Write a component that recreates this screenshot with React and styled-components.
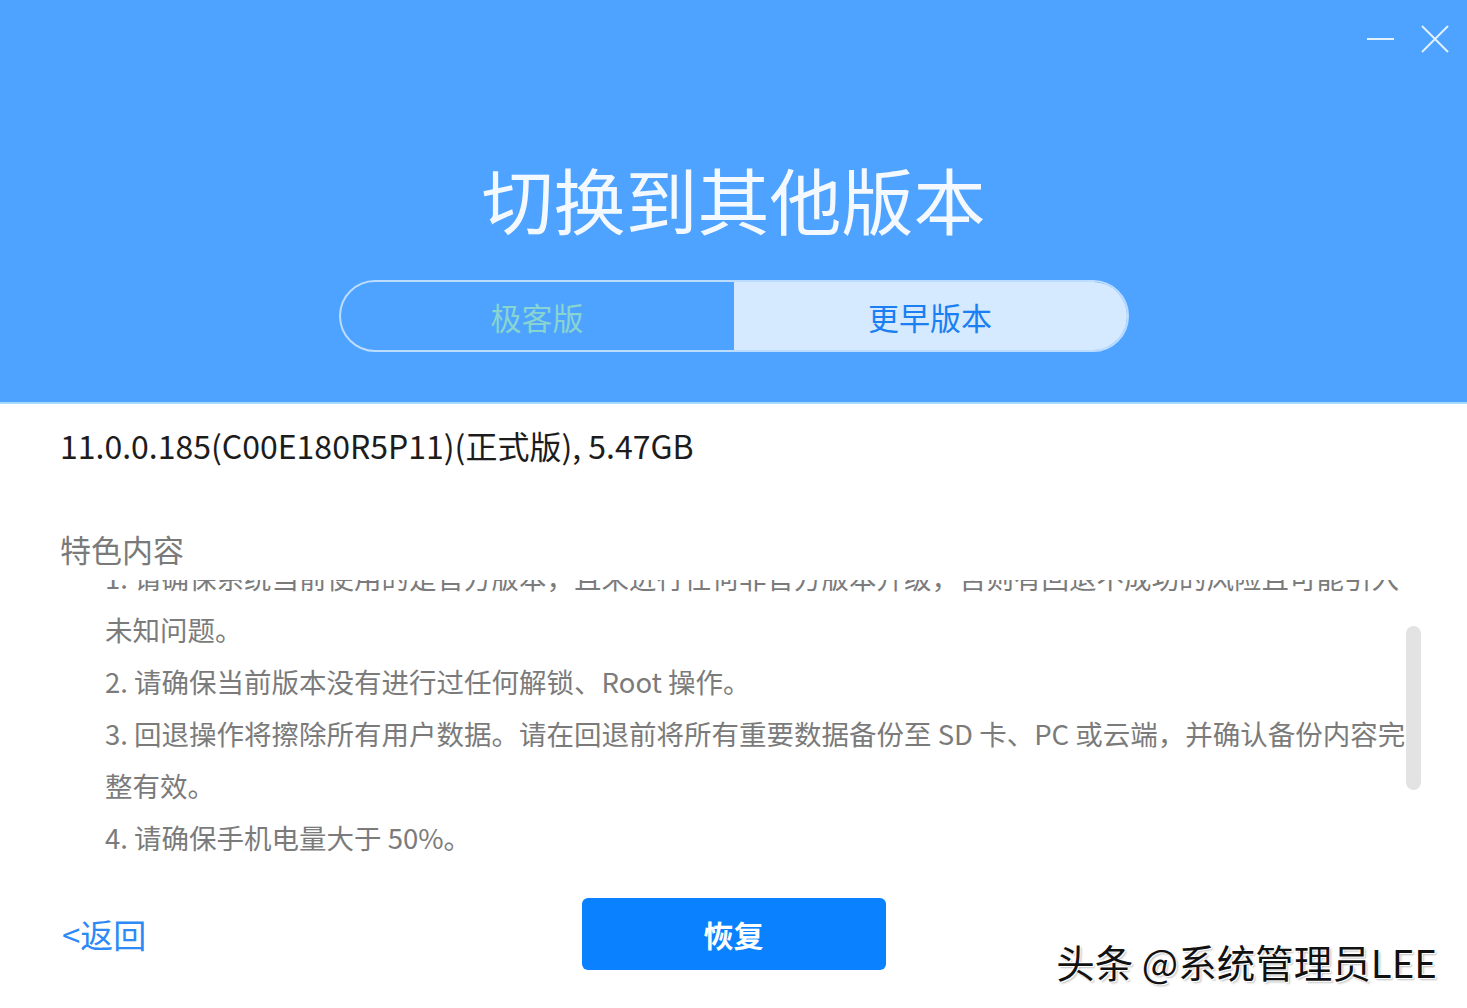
import React, { useLayoutEffect, useRef } from "react";
import styled, { createGlobalStyle } from "styled-components";

const GlobalStyle = createGlobalStyle`
  html, body { margin: 0; padding: 0; background: #ffffff; }
  body { font-family: "Noto Sans CJK SC", "Noto Sans", sans-serif; }
  * { box-sizing: border-box; }
`;

const FONT = `"Noto Sans CJK SC", "Noto Sans", sans-serif`;

const Page = styled.div`
  position: relative;
  width: 100%;
  min-height: 100vh;
  background: #ffffff;
  font-family: ${FONT};
  overflow: hidden;
`;

const Header = styled.header`
  height: 404px;
  background: #4da3ff;
  border-bottom: 2px solid #a6dbff;
  display: flex;
  flex-direction: column;
  align-items: center;
`;

const ControlsRow = styled.div`
  align-self: stretch;
  height: 78px;
  display: flex;
  justify-content: flex-end;
  align-items: center;
  gap: 26px;
  padding-right: 18px;
`;

const WinButton = styled.button`
  width: 28px;
  height: 28px;
  padding: 0;
  border: none;
  background: transparent;
  display: flex;
  align-items: center;
  justify-content: center;
  cursor: pointer;
`;

const Title = styled.h1`
  margin: 77px 0 0;
  font-size: 72px;
  line-height: 86px;
  font-weight: 400;
  color: #f4f9ff;
  letter-spacing: 0;
`;

const TabGroup = styled.div`
  margin-top: 39px;
  width: 790px;
  height: 72px;
  display: flex;
  border: 2px solid rgba(225, 240, 255, 0.75);
  border-radius: 36px;
  overflow: hidden;
`;

const Tab = styled.button`
  flex: 1;
  border: none;
  margin: 0;
  padding: 0;
  font-family: ${FONT};
  font-size: 31px;
  background: ${(p) => (p.$active ? "#d5eaff" : "transparent")};
  color: ${(p) => (p.$active ? "#1a7ff2" : "#88d4d0")};
  cursor: pointer;
`;

const Content = styled.main`
  padding: 19px 46px 0 60px;
`;

const VersionLine = styled.div`
  font-size: 32px;
  line-height: 44px;
  color: #1c1c1c;
`;

const SectionLabel = styled.div`
  margin-top: 60px;
  font-size: 31px;
  line-height: 44px;
  color: #7a7a7a;
`;

const ScrollArea = styled.div`
  position: relative;
  margin-top: 9px;
`;

const Viewport = styled.div`
  height: 290px;
  overflow: hidden;
`;

const NoteList = styled.ol`
  list-style: none;
  margin: 0;
  padding: 0 11px 60px 45px;
`;

const NoteItem = styled.li`
  font-size: 27.5px;
  line-height: 52px;
  color: #7b7b7b;
`;

const Thumb = styled.div`
  position: absolute;
  right: 0;
  top: 46px;
  width: 15px;
  height: 164px;
  border-radius: 8px;
  background: #e3e3e3;
`;

const Footer = styled.footer`
  margin-top: 28px;
  display: grid;
  grid-template-columns: 1fr auto 1fr;
  align-items: center;
  padding: 0 62px;
`;

const BackLink = styled.a`
  justify-self: start;
  font-size: 33px;
  line-height: 44px;
  color: #2b8af5;
  text-decoration: none;
  cursor: pointer;
`;

const PrimaryButton = styled.button`
  width: 304px;
  height: 72px;
  border: none;
  border-radius: 6px;
  background: #0a82ff;
  color: #ffffff;
  font-family: ${FONT};
  font-size: 30px;
  font-weight: 700;
  cursor: pointer;
`;

const Watermark = styled.div`
  position: absolute;
  right: 30px;
  bottom: 22px;
  font-family: ${FONT};
  font-size: 38.5px;
  line-height: 50px;
  color: #111111;
  text-shadow: 1px 1px 0 #ffffff, -1px -1px 0 #ffffff, 2px 2px 2px rgba(0,0,0,0.25);
  pointer-events: none;
`;

const notes = [
  "1. 请确保系统当前使用的是官方版本，且未进行任何非官方版本升级，否则有回退不成功的风险且可能引入未知问题。",
  "2. 请确保当前版本没有进行过任何解锁、Root 操作。",
  "3. 回退操作将擦除所有用户数据。请在回退前将所有重要数据备份至 SD 卡、PC 或云端，并确认备份内容完整有效。",
  "4. 请确保手机电量大于 50%。",
];

export default function App() {
  const viewportRef = useRef(null);
  useLayoutEffect(() => {
    if (viewportRef.current) viewportRef.current.scrollTop = 29;
  }, []);

  return (
    <Page>
      <GlobalStyle />
      <Header>
        <ControlsRow>
          <WinButton aria-label="最小化">
            <svg width="28" height="28" viewBox="0 0 28 28">
              <line x1="0" y1="14" x2="27" y2="14" stroke="#e3f1ff" strokeWidth="2" />
            </svg>
          </WinButton>
          <WinButton aria-label="关闭">
            <svg width="28" height="28" viewBox="0 0 28 28">
              <line x1="1" y1="1" x2="27" y2="27" stroke="#e3f1ff" strokeWidth="2" />
              <line x1="27" y1="1" x2="1" y2="27" stroke="#e3f1ff" strokeWidth="2" />
            </svg>
          </WinButton>
        </ControlsRow>
        <Title>切换到其他版本</Title>
        <TabGroup>
          <Tab>极客版</Tab>
          <Tab $active>更早版本</Tab>
        </TabGroup>
      </Header>
      <Content>
        <VersionLine>11.0.0.185(C00E180R5P11)(正式版), 5.47GB</VersionLine>
        <SectionLabel>特色内容</SectionLabel>
        <ScrollArea>
          <Viewport ref={viewportRef}>
            <NoteList>
              {notes.map((n) => (
                <NoteItem key={n}>{n}</NoteItem>
              ))}
            </NoteList>
          </Viewport>
          <Thumb />
        </ScrollArea>
      </Content>
      <Footer>
        <BackLink>&lt;返回</BackLink>
        <PrimaryButton>恢复</PrimaryButton>
        <span />
      </Footer>
      <Watermark>头条 @系统管理员LEE</Watermark>
    </Page>
  );
}
